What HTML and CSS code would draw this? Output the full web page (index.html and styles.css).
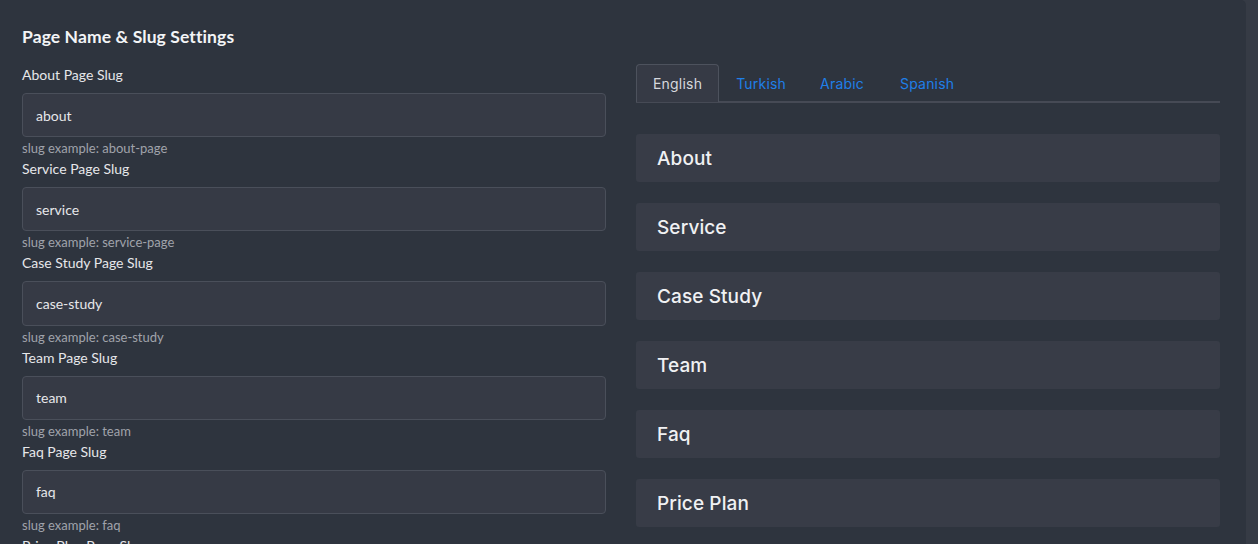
FILE: index.html
```html
<!DOCTYPE html>
<html>
<head>
<meta charset="utf-8">
<link rel="stylesheet" href="styles.css">
</head>
<body>
<div class="page">
  <div class="card">
    <h2 class="title">Page Name &amp; Slug Settings</h2>
    <div class="grid">
      <div class="col-left">
        <div class="field">
          <label class="label">About Page Slug</label>
          <div class="input">about</div>
          <div class="help">slug example: about-page</div>
        </div>
        <div class="field">
          <label class="label">Service Page Slug</label>
          <div class="input">service</div>
          <div class="help">slug example: service-page</div>
        </div>
        <div class="field">
          <label class="label">Case Study Page Slug</label>
          <div class="input">case-study</div>
          <div class="help">slug example: case-study</div>
        </div>
        <div class="field">
          <label class="label">Team Page Slug</label>
          <div class="input">team</div>
          <div class="help">slug example: team</div>
        </div>
        <div class="field">
          <label class="label">Faq Page Slug</label>
          <div class="input">faq</div>
          <div class="help">slug example: faq</div>
        </div>
        <div class="field">
          <label class="label">Price Plan Page Slug</label>
        </div>
      </div>
      <div class="col-right">
        <div class="tabs">
          <span class="tab active">English</span>
          <span class="tab">Turkish</span>
          <span class="tab">Arabic</span>
          <span class="tab">Spanish</span>
        </div>
        <div class="items">
          <div class="item">About</div>
          <div class="item">Service</div>
          <div class="item">Case Study</div>
          <div class="item">Team</div>
          <div class="item">Faq</div>
          <div class="item">Price Plan</div>
        </div>
      </div>
    </div>
  </div>
  <div class="side"></div>
</div>
</body>
</html>
```

FILE: styles.css
```css
* { box-sizing: border-box; }
html, body { margin: 0; padding: 0; }
body {
  background: #363b45;
  font-family: Lato, "Liberation Sans", sans-serif;
  color: #e8e9ec;
  height: 544px;
  overflow: hidden;
}
.page {
  display: flex;
  height: 544px;
}
.card {
  width: 1246px;
  background: #2e343e;
  border-top-right-radius: 5px;
  padding: 24px 0 0 22px;
  flex: none;
}
.side { flex: 1; }
.title {
  margin: 0;
  font-size: 17.5px;
  font-weight: 700;
  line-height: 26px;
  color: #f3f4f6;
  letter-spacing: 0.1px;
}
.grid {
  display: grid;
  grid-template-columns: 584px 584px;
  column-gap: 30px;
  margin-top: 15px;
}
.field { display: flex; flex-direction: column; }
.label {
  font-size: 14px;
  line-height: 20px;
  color: #e6e7ea;
  margin-top: 2px;
}
.field:first-child .label { margin-top: 0; }
.input {
  margin-top: 8px;
  height: 44.2px;
  border: 1px solid #4a4f5a;
  border-radius: 4px;
  background: #363a45;
  padding: 0 13px;
  display: flex;
  align-items: center;
  font-size: 14px;
  color: #e6e7ea;
}
.help {
  margin-top: 2px;
  font-size: 13px;
  line-height: 18px;
  color: #a0a3ab;
}
.tabs {
  display: flex;
  align-items: flex-end;
  height: 39px;
  border-bottom: 2px solid #464a55;
  margin-top: -1px;
}
.tab {
  font-family: Inter, "Open Sans", sans-serif;
  font-size: 14px;
  color: #1f7fe8;
  padding: 0 16px;
  height: 38px;
  line-height: 37px;
  margin-bottom: -1px;
  letter-spacing: 0.2px;
  border: 1px solid transparent;
  border-bottom: none;
}
.tab:last-child { padding-left: 18px; }
.tab.active {
  color: #d6d8dd;
  background: #363a45;
  border: 1px solid #4d525d;
  border-bottom: none;
  border-radius: 4px 4px 0 0;
}
.items {
  margin-top: 31px;
  display: flex;
  flex-direction: column;
  gap: 21px;
}
.item {
  height: 48px;
  background: #383c47;
  border-radius: 3px;
  padding: 0 21px;
  display: flex;
  align-items: center;
  font-family: Inter, "Open Sans", sans-serif;
  font-weight: 500;
  font-size: 19px;
  color: #f0f1f3;
  letter-spacing: 0.1px;
}
```
